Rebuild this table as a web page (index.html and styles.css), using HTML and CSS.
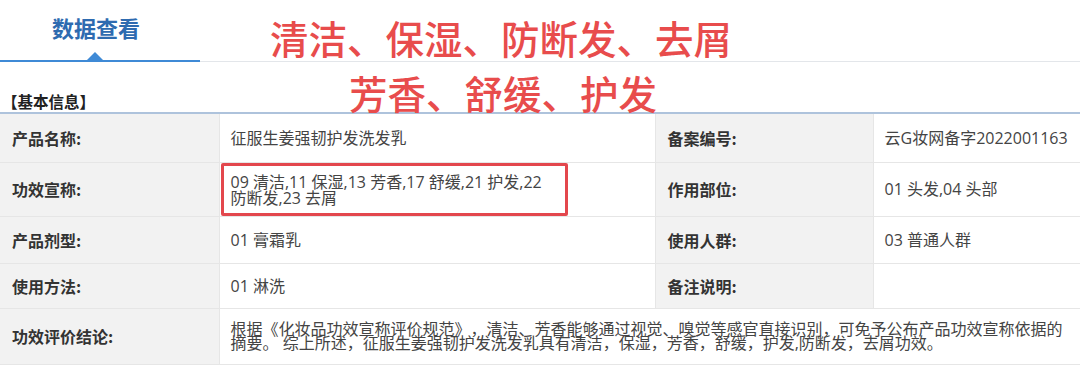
FILE: index.html
```html
<!DOCTYPE html>
<html lang="zh">
<head>
<meta charset="utf-8">
<link rel="stylesheet" href="styles.css">
</head>
<body>
<div class="page">
  <div class="tabs">
    <div class="tab active">数据查看</div>
    <div class="tab-rest"></div>
  </div>
  <div class="note">
    <div class="note-line1">清洁、保湿、防断发、去屑</div>
    <div class="note-line2">芳香、舒缓、护发</div>
  </div>
  <div class="section-title">【基本信息】</div>
  <table class="info">
    <colgroup>
      <col class="c1"><col class="c2"><col class="c3"><col class="c4">
    </colgroup>
    <tr class="r1">
      <th>产品名称:</th><td>征服生姜强韧护发洗发乳</td>
      <th>备案编号:</th><td>云G妆网备字2022001163</td>
    </tr>
    <tr class="r2">
      <th>功效宣称:</th><td class="boxed"><div class="box">09 清洁,11 保湿,13 芳香,17 舒缓,21 护发,22 防断发,23 去屑</div></td>
      <th>作用部位:</th><td>01 头发,04 头部</td>
    </tr>
    <tr class="r3">
      <th>产品剂型:</th><td>01 膏霜乳</td>
      <th>使用人群:</th><td>03 普通人群</td>
    </tr>
    <tr class="r4">
      <th>使用方法:</th><td>01 淋洗</td>
      <th>备注说明:</th><td></td>
    </tr>
    <tr class="r5">
      <th>功效评价结论:</th><td colspan="3" class="long">根据《化妆品功效宣称评价规范》，清洁、芳香能够通过视觉、嗅觉等感官直接识别，可免予公布产品功效宣称依据的摘要。 综上所述，征服生姜强韧护发洗发乳具有清洁，保湿，芳香，舒缓，护发,防断发，去屑功效。</td>
    </tr>
  </table>
</div>
</body>
</html>
```

FILE: styles.css
```css
* { box-sizing: border-box; }
html, body { margin: 0; padding: 0; background: #fff; }
body {
  font-family: "Noto Sans CJK SC", "Noto Sans", sans-serif;
  color: #444;
  width: 1080px;
  height: 365px;
  overflow: hidden;
  text-spacing-trim: space-all;
}
.page { position: relative; }

.tabs {
  display: flex;
  align-items: flex-end;
  height: 62px;
}
.tab {
  position: relative;
  width: 200px;
  height: 62px;
  padding-right: 8px;
  padding-top: 12px;
  text-align: center;
  font-size: 22px;
  font-weight: bold;
  color: #2e6bb0;
  line-height: 30px;
  border-bottom: 2px solid #3f8ad6;
}
.tab::after {
  content: "";
  position: absolute;
  left: 87px;
  bottom: 0;
  width: 0;
  height: 0;
  border-left: 8px solid transparent;
  border-right: 8px solid transparent;
  border-bottom: 8px solid #3f8ad6;
}
.tab-rest {
  flex: 1;
  height: 1px;
  background: #e3e6ea;
}

.note {
  position: absolute;
  left: 270px;
  top: 11px;
  color: #e84c4c;
  font-size: 38.5px;
  font-weight: 500;
  line-height: 52px;
}
.note-line2 { padding-left: 79px; margin-top: 3px; }

.section-title {
  height: 50px;
  padding-top: 29px;
  padding-left: 2px;
  font-size: 15.5px;
  font-weight: bold;
  color: #222;
  line-height: 20px;
}

.info {
  width: 1080px;
  border-collapse: collapse;
  table-layout: fixed;
  border-top: 2px solid #aec3dc;
}
.c1 { width: 219px; }
.c2 { width: 436px; }
.c3 { width: 218px; }
.c4 { width: 207px; }
.info th, .info td {
  border: 1px solid #e6e6e6;
  border-top: none;
  vertical-align: middle;
  font-size: 16px;
  line-height: 16px;
  padding: 0 0 0 11px;
}
.info th {
  background: #f2f2f2;
  text-align: left;
  font-weight: bold;
  color: #333;
  padding-left: 12px;
}
.info tr > :first-child { border-left: none; }
.info tr > :last-child { border-right: none; }
.info td {
  background: #fff;
  color: #444;
  font-family: "Open Sans", "Noto Sans CJK SC", sans-serif;
}
.r1 > * { height: 49px; }
.r2 > * { height: 53px; }
.r3 > * { height: 47px; }
.r4 > * { height: 45px; }
.r5 > * { height: 56px; }

.info td.boxed { padding: 0 0 0 1px; }
.box {
  width: 347px;
  height: 53px;
  border: 3px solid #e3474d;
  border-radius: 2px;
  padding: 8px 8px 0 7px;
  line-height: 16px;
}
.info td.long { line-height: 14px; padding-right: 6px; }
```
